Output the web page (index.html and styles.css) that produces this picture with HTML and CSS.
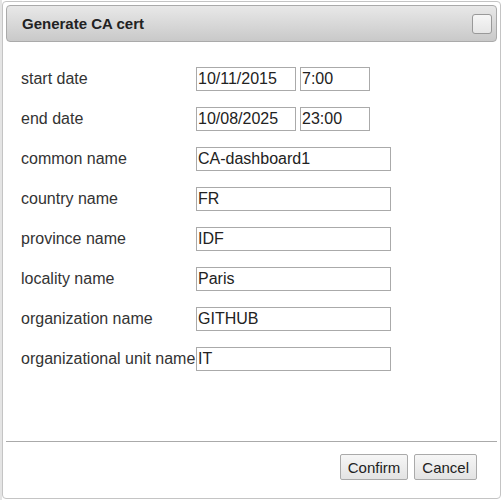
FILE: index.html
```html
<!DOCTYPE html>
<html>
<head>
<meta charset="utf-8">
<link rel="stylesheet" href="styles.css">
</head>
<body>
<div class="page-strip"></div>
<div class="dialog">
  <div class="titlebar">
    <span class="title">Generate CA cert</span>
    <button class="close" aria-label="close"></button>
  </div>
  <div class="content">
    <div class="form">
      <label class="lbl">start date</label>
      <div class="field"><input class="in date" value="10/11/2015"><input class="in time" value="7:00"></div>
      <label class="lbl">end date</label>
      <div class="field"><input class="in date" value="10/08/2025"><input class="in time" value="23:00"></div>
      <label class="lbl">common name</label>
      <div class="field"><input class="in text" value="CA-dashboard1"></div>
      <label class="lbl">country name</label>
      <div class="field"><input class="in text" value="FR"></div>
      <label class="lbl">province name</label>
      <div class="field"><input class="in text" value="IDF"></div>
      <label class="lbl">locality name</label>
      <div class="field"><input class="in text" value="Paris"></div>
      <label class="lbl">organization name</label>
      <div class="field"><input class="in text" value="GITHUB"></div>
      <label class="lbl">organizational unit name</label>
      <div class="field"><input class="in text" value="IT"></div>
    </div>
  </div>
  <div class="buttonpane">
    <button class="btn">Confirm</button>
    <button class="btn">Cancel</button>
  </div>
</div>
</body>
</html>
```
FILE: styles.css
```css
html, body {
  margin: 0;
  padding: 0;
  background: #fff;
  font-family: "Liberation Sans", Arial, sans-serif;
}
body {
  position: relative;
  width: 501px;
  height: 500px;
  overflow: hidden;
}
.page-strip {
  position: absolute;
  left: 0;
  top: 0;
  width: 2px;
  height: 500px;
  background: #e4e4e4;
}
.dialog {
  position: absolute;
  left: 2px;
  top: 1px;
  width: 499px;
  height: 498px;
  box-sizing: border-box;
  border: 1px solid #c4c4c4;
  border-radius: 4px;
  padding: 3px;
  background: #fff;
  display: flex;
  flex-direction: column;
}
.titlebar {
  height: 37px;
  box-sizing: border-box;
  border: 1px solid #aaa;
  border-radius: 4px;
  background: linear-gradient(#e8e8e8, #c9c9c9);
  display: flex;
  align-items: center;
  padding: 0 4px 0 15px;
}
.title {
  font-weight: bold;
  font-size: 15px;
  color: #222;
}
.close {
  margin-left: auto;
  width: 20px;
  height: 20px;
  box-sizing: border-box;
  border: 1px solid #999;
  border-radius: 3px;
  background: linear-gradient(#f6f6f6, #e6e6e6);
  padding: 0;
}
.content {
  flex: 1;
  padding: 17px 15px 0 15px;
}
.form {
  display: grid;
  grid-template-columns: 175px 1fr;
  grid-auto-rows: 40px;
  align-items: center;
}
.lbl {
  font-size: 16px;
  color: #333;
  white-space: nowrap;
}
.field {
  display: flex;
  gap: 4px;
}
.in {
  box-sizing: border-box;
  height: 24px;
  border: 1px solid #aaa;
  padding: 0 1px;
  margin: 0;
  font-family: "Liberation Sans", Arial, sans-serif;
  font-size: 16px;
  color: #222;
  background: #fff;
  outline: none;
}
.date { width: 100px; }
.time { width: 70px; }
.text { width: 195px; }
.buttonpane {
  border-top: 1px solid #aaa;
  padding: 12px 20px 15px 0;
  display: flex;
  justify-content: flex-end;
  gap: 6px;
}
.btn {
  height: 26px;
  box-sizing: border-box;
  border: 1px solid #aaa;
  border-radius: 2px;
  background: linear-gradient(#f6f6f6, #e3e3e3);
  font-family: "Liberation Sans", Arial, sans-serif;
  font-size: 15px;
  color: #222;
  padding: 0 7px;
  margin: 0;
}
```
